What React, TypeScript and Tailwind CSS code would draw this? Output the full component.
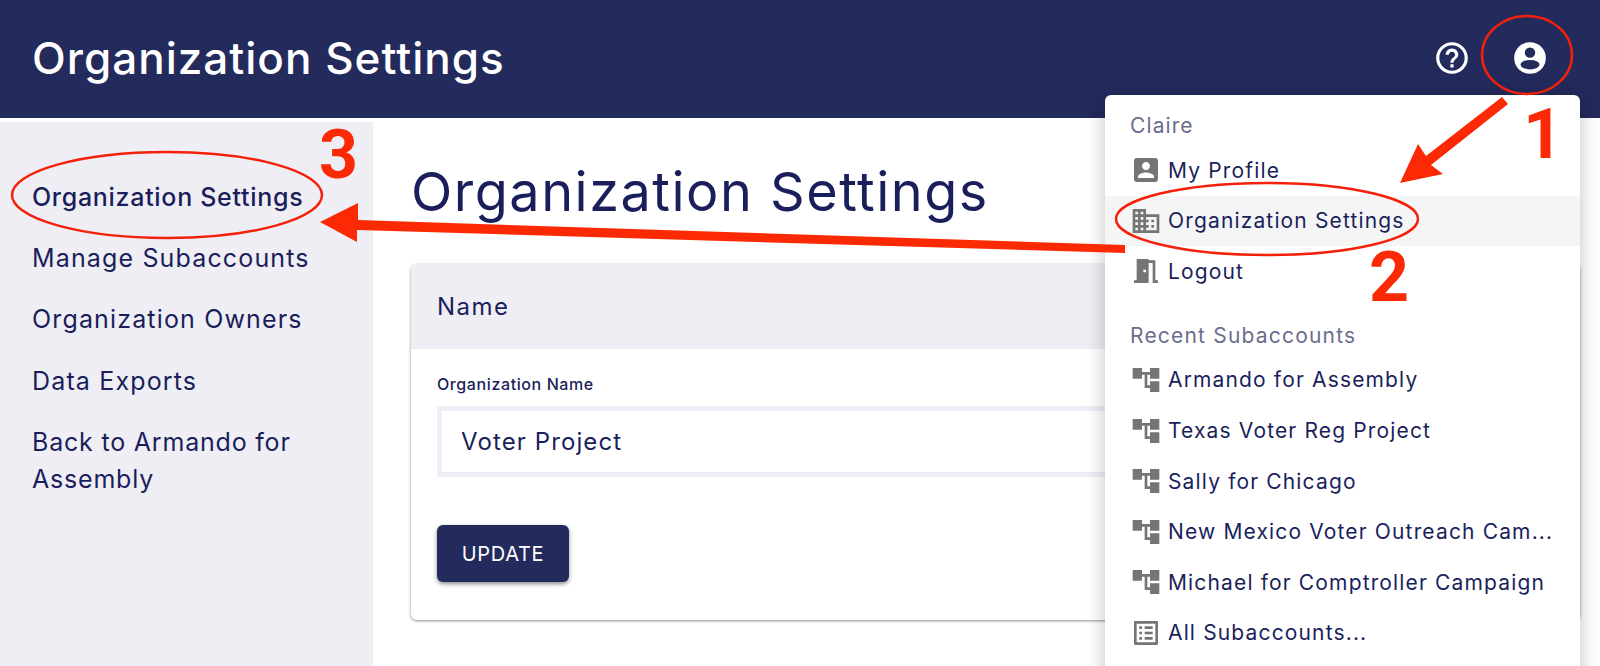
const F = "[font-family:Inter,'Noto_Sans',sans-serif]";

function Mi({ d, className = "w-8 h-8 text-[#757575]" }: { d: string; className?: string }) {
  return (
    <svg viewBox="0 0 24 24" className={className} fill="currentColor" fillRule="evenodd">
      <path d={d} />
    </svg>
  );
}

const TREE = "M22 11V3h-7v3H9V3H2v8h7V8h2v10h4v3h7v-8h-7v3h-2V8h2v3z";
const BOX = "M3 5v14c0 1.1.89 2 2 2h14c1.1 0 2-.9 2-2V5c0-1.1-.9-2-2-2H5c-1.11 0-2 .9-2 2zm12 4c0 1.66-1.34 3-3 3s-3-1.34-3-3 1.34-3 3-3 3 1.34 3 3zm-9 8c0-2 4-3.1 6-3.1s6 1.1 6 3.1v1H6v-1z";
const DOMAIN = "M12 7V3H2v18h20V7H12zM6 19H4v-2h2v2zm0-4H4v-2h2v2zm0-4H4V9h2v2zm0-4H4V5h2v2zm4 12H8v-2h2v2zm0-4H8v-2h2v2zm0-4H8V9h2v2zm0-4H8V5h2v2zm10 12h-8v-2h2v-2h-2v-2h2v-2h-2V9h8v10zm-2-8h-2v2h2v-2zm0 4h-2v2h2v-2z";
const DOOR = "M14 6v15H3v-2h2V3h9v1h5v15h2v2h-4V6h-3zm-4 5v2h2v-2h-2z";
const LIST = "M19 5v14H5V5h14m1.1-2H3.9c-.5 0-.9.4-.9.9v16.2c0 .4.4.9.9.9h16.2c.4 0 .9-.5.9-.9V3.9c0-.5-.5-.9-.9-.9zM11 7h6v2h-6V7zm0 4h6v2h-6v-2zm0 4h6v2h-6v-2zM7 7h2v2H7V7zm0 4h2v2H7v-2zm0 4h2v2H7v-2z";
const HELP = "M11 18h2v-2h-2v2zm1-16C6.48 2 2 6.48 2 12s4.48 10 10 10 10-4.48 10-10S17.52 2 12 2zm0 18c-4.41 0-8-3.59-8-8s3.59-8 8-8 8 3.59 8 8-3.59 8-8 8zm0-14c-2.21 0-4 1.79-4 4h2c0-1.1.9-2 2-2s2 .9 2 2c0 2-3 1.75-3 5h2c0-2.25 3-2.5 3-5 0-2.21-1.79-4-4-4z";

function MenuRow({ icon, label, active }: { icon: string; label: string; active?: boolean }) {
  return (
    <div className={`flex items-center h-[50.6px] pl-[25px] gap-[6px] ${active ? "bg-[#f5f5f5]" : ""}`}>
      <Mi d={icon} />
      <span className="text-[21px] tracking-[1.15px] text-[#1a1f5c] whitespace-nowrap">{label}</span>
    </div>
  );
}

export default function App() {
  const nav = ["Manage Subaccounts", "Organization Owners", "Data Exports"];
  const subs = [
    "Armando for Assembly",
    "Texas Voter Reg Project",
    "Sally for Chicago",
    "New Mexico Voter Outreach Cam...",
    "Michael for Comptroller Campaign",
  ];
  return (
    <div className={`relative h-[666px] w-[1600px] overflow-hidden bg-white text-[#1a1f5c] ${F}`}>
      <header className="h-[118px] bg-[#232a5c] flex items-center justify-between pl-[32px] pr-[51px] pb-[2px]">
        <h1 className="text-[44px] font-medium text-white tracking-[1px] leading-none">Organization Settings</h1>
        <div className="flex items-center gap-[40px]">
          <Mi d={HELP} className="w-[38px] h-[38px] text-white" />
          <svg viewBox="0 0 24 24" className="w-[38px] h-[38px] text-white">
            <circle cx="12" cy="12" r="10" fill="currentColor" />
            <circle cx="12" cy="8.6" r="3.3" fill="#232a5c" />
            <ellipse cx="12" cy="16.2" rx="6" ry="3" fill="#232a5c" />
          </svg>
        </div>
      </header>

      <div className="flex h-[548px] mt-[4px]">
        <aside className="w-[373px] shrink-0 bg-[#efeef4] pt-[57px] pl-[32px] pr-[40px] text-[25px] leading-[37px]">
          <div className="font-medium tracking-[0.7px] mb-[24px] whitespace-nowrap">Organization Settings</div>
          {nav.map((n) => (
            <div key={n} className="mb-[24.4px] tracking-[1.15px]">{n}</div>
          ))}
          <div className="tracking-[0.8px]">Back to Armando for Assembly</div>
        </aside>

        <main className="flex-1 pl-[38px] pr-[20px] pt-[33px]">
          <h2 className="text-[54px] leading-[74px] tracking-[1.5px] mb-[35px]">Organization Settings</h2>
          <section className="rounded-[6px] shadow-[0_1px_3px_rgba(0,0,0,0.45)] overflow-hidden h-[356px] bg-white">
            <div className="h-[85px] bg-[#efeef4] flex items-center pl-[26px] text-[24px] tracking-[1.5px]">Name</div>
            <div className="px-[26px] pt-[23px]">
              <label className="block text-[16px] font-medium leading-[24px] mb-[10px] tracking-[0.6px]">Organization Name</label>
              <div className="h-[71px] border-[5px] border-[#efeef6] flex items-center pl-[19px] text-[24px] tracking-[1.1px]">
                Voter Project
              </div>
              <button className="mt-[48px] w-[132px] h-[57px] rounded-[6px] bg-[#232a5c] text-white text-[20px] tracking-[0.7px] shadow-[0_2px_4px_rgba(0,0,0,0.45)]">
                UPDATE
              </button>
            </div>
          </section>
        </main>
      </div>

      {/* open account menu */}
      <div className="absolute left-[1105px] top-[95px] w-[475px] h-[600px] bg-white rounded-[6px] shadow-[0_4px_20px_rgba(0,0,0,0.25)]">
        <div className="h-[50px] pt-[16px] pl-[25px] text-[21px] leading-[30px] tracking-[1.1px] text-[#6b6d8f]">Claire</div>
        <MenuRow icon={BOX} label="My Profile" />
        <MenuRow icon={DOMAIN} label="Organization Settings" active />
        <MenuRow icon={DOOR} label="Logout" />
        <div className="h-[58px] pt-[24px] pl-[25px] text-[21px] leading-[30px] tracking-[1.2px] text-[#6b6d8f]">Recent Subaccounts</div>
        {subs.map((s) => (
          <MenuRow key={s} icon={TREE} label={s} />
        ))}
        <MenuRow icon={LIST} label="All Subaccounts..." />
      </div>

      {/* hand-drawn annotations */}
      <svg viewBox="0 0 1600 666" className="absolute inset-0 w-[1600px] h-[666px] pointer-events-none">
        <g fill="none" stroke="#f5200a" strokeWidth="2.5">
          <ellipse cx="1527" cy="55" rx="45" ry="39" />
          <ellipse cx="1267" cy="219" rx="151" ry="36" />
          <ellipse cx="167" cy="195" rx="155" ry="43" />
        </g>
        <g fill="#fb2a04">
          <polygon points="1502,97 1508,104 1431,165 1443,174 1400,183 1418,144 1426,156" />
          <polygon points="1125,245 1125,253 357,230 357,242 320,222 358,203 358,220" />
          <text x="1523" y="158" fontSize="70" fontWeight="700" fontFamily="Roboto, sans-serif">1</text>
          <text x="1369" y="301" fontSize="70" fontWeight="700" fontFamily="Roboto, sans-serif">2</text>
          <text x="319" y="178" fontSize="68" fontWeight="700" fontFamily="Roboto, sans-serif">3</text>
        </g>
      </svg>
    </div>
  );
}
